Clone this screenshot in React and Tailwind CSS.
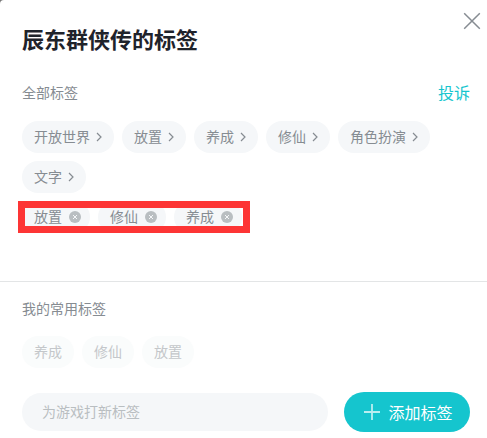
import React, { useState } from "react";

const allTags = ["开放世界", "放置", "养成", "修仙", "角色扮演", "文字"];
const commonTags = ["养成", "修仙", "放置"];

const CloseIcon = () => (
  <svg width="18" height="18" viewBox="0 0 18 18" fill="none" stroke="#868c92" strokeWidth="1.5">
    <path d="M1.2 1.2 16.8 16.8M16.8 1.2 1.2 16.8" />
  </svg>
);

const ArrowIcon = () => (
  <svg width="6" height="10" viewBox="0 0 6 10" fill="none" stroke="#868c92" strokeWidth="1.2">
    <path d="M1 1 5 5 1 9" />
  </svg>
);

const RemoveIcon = () => (
  <svg width="12" height="12" viewBox="0 0 12 12" fill="none">
    <circle cx="6" cy="6" r="6" fill="#b9bec1" />
    <path d="m4 4 4 4M8 4 4 8" stroke="#f5f7f9" strokeWidth="1" />
  </svg>
);

const PlusIcon = () => (
  <svg width="16" height="16" viewBox="0 0 16 16" fill="none" stroke="#fff" strokeOpacity="0.7" strokeWidth="1.8">
    <path d="M8 0v16M0 8h16" />
  </svg>
);

const App = () => {
  const [selected, setSelected] = useState(["放置", "修仙", "养成"]);
  const [value, setValue] = useState("");

  const remove = (tag) => setSelected(selected.filter((t) => t !== tag));

  const add = () => {
    const tag = value.trim();
    if (!tag || selected.includes(tag)) return;
    setSelected([...selected, tag]);
    setValue("");
  };

  return (
    <div className="bg-[#777777] w-[487px] h-[438px] overflow-hidden font-['Noto_Sans_CJK_SC',sans-serif]">
      <div className="bg-white h-full rounded-tl-[4px] flex flex-col text-sm text-[#868c92]">
        <div className="flex justify-between pl-[22px] pr-[6px] pt-3">
          <h1 className="mt-[10px] mb-[2px] text-[22px] leading-8 font-bold text-[#1f232b]">辰东群侠传的标签</h1>
          <button className="h-[18px]" aria-label="关闭">
            <CloseIcon />
          </button>
        </div>

        <div className="flex items-center justify-between mt-6 mb-px pl-[22px] pr-[17px] h-6">
          <span className="leading-5">全部标签</span>
          <button className="text-base leading-6 text-[#15c5ce]">投诉</button>
        </div>

        <div className="flex flex-wrap gap-2 mt-4 px-[22px]">
          {allTags.map((tag) => (
            <button key={tag} className="flex items-center h-8 pl-3 pr-3 gap-[6px] rounded-full bg-[#f5f7f9]">
              <span className="leading-5 pb-[2px]">{tag}</span>
              <ArrowIcon />
            </button>
          ))}
        </div>

        {/* tags picked by the user, framed in red */}
        <div className="relative mt-2 ml-[22px] h-8">
          <div className="flex gap-2">
            {selected.map((tag) => (
              <div key={tag} className="flex items-center justify-between w-[68px] h-8 pl-3 pr-[9px] rounded-full bg-[#f5f7f9]">
                <span className="leading-5 pb-[2px]">{tag}</span>
                <button onClick={() => remove(tag)} aria-label="删除">
                  <RemoveIcon />
                </button>
              </div>
            ))}
          </div>
          <div className="absolute -left-1 top-0 w-[232px] h-8 border-7 border-[#fd3535] pointer-events-none" />
        </div>

        <div className="mt-12 border-t border-[#e3e5e6] pt-4 px-[22px]">
          <p className="leading-5">我的常用标签</p>
          <div className="flex gap-2 mt-[18px]">
            {commonTags.map((tag) => (
              <span key={tag} className="h-8 leading-[30px] px-3 rounded-full bg-[#fafcfc] text-[#c4c7ca]">
                {tag}
              </span>
            ))}
          </div>
        </div>

        <div className="flex items-center gap-4 mt-6 pl-[22px]">
          <input
            value={value}
            onChange={(e) => setValue(e.target.value)}
            placeholder="为游戏打新标签"
            className="w-[306px] h-[38px] px-5 pb-[2px] rounded-full bg-[#f5f7f9] outline-none placeholder:text-[#b9bec1]"
          />
          <button
            onClick={add}
            className="flex items-center justify-center gap-2 w-[126px] h-10 pl-[3px] rounded-full bg-[#15c5ce] text-base text-white"
          >
            <PlusIcon />
            <span className="leading-6">添加标签</span>
          </button>
        </div>
      </div>
    </div>
  );
};

export default App;
